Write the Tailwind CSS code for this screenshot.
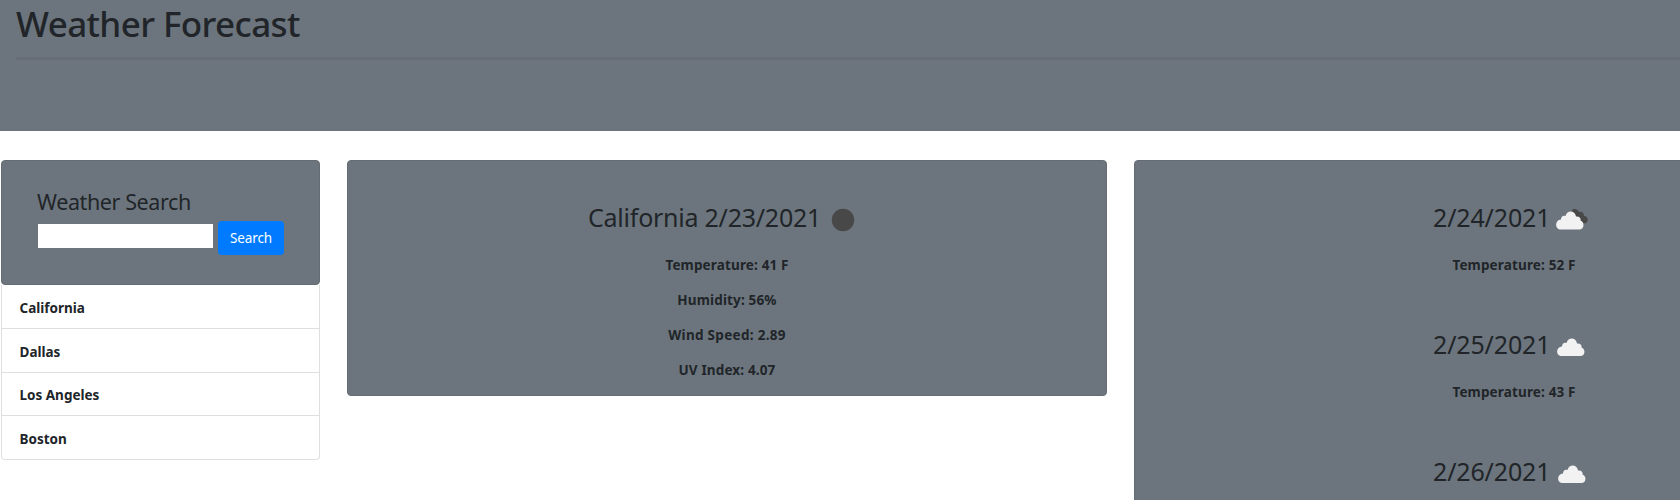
<!DOCTYPE html>
<html lang="en">
<head>
<meta charset="utf-8">
<title>Weather Forecast</title>
<script src="https://cdn.jsdelivr.net/npm/@tailwindcss/browser@4"></script>
</head>
<body class="h-[500px] w-[1680px] overflow-hidden bg-white font-['Noto_Sans',sans-serif] text-[#212529]">
<header class="h-[131px] bg-[#6c757d] pl-4">
  <h1 class="h-[57px] pt-px text-[35px] leading-[45px] font-medium tracking-[-0.6px] whitespace-nowrap">Weather Forecast</h1>
  <hr class="border-t-3 border-[#676e78]">
</header>
<main class="flex h-[369px] items-start overflow-hidden pt-[29px] pl-px">
  <aside class="w-[319px] shrink-0">
    <section class="h-[125px] rounded border border-[#656c74] bg-[#6c757d] pt-[25px] pl-[35px]">
      <h2 class="text-[21.5px] leading-[32px] tracking-[-0.4px] whitespace-nowrap">Weather Search</h2>
      <form class="mt-[3px] flex items-start gap-[5px]">
        <input class="mt-[3px] ml-px h-6 w-[175px] bg-white" aria-label="City">
        <button type="button" class="h-[34px] w-[66px] rounded bg-[#007bff] text-[13.5px] tracking-[-0.1px] text-white">Search</button>
      </form>
    </section>
    <ul class="h-[175px] rounded-b border-x border-b border-[#dfdfdf] text-[13.5px] leading-[43px] font-bold">
      <li class="h-[44px] border-b border-[#dfdfdf] pt-0.5 pl-[17.500px]">California</li>
      <li class="h-[44px] border-b border-[#dfdfdf] pt-0.5 pl-[17.500px]">Dallas</li>
      <li class="h-[43px] border-b border-[#dfdfdf] pt-px pl-[17.500px]">Los Angeles</li>
      <li class="h-[43px] pt-0.5 pl-[17.500px]">Boston</li>
    </ul>
  </aside>
  <section class="ml-[27px] h-[236px] w-[760px] shrink-0 rounded border border-[#656c74] bg-[#6c757d] pt-[37px] text-center">
    <h2 class="flex h-[40px] items-start pl-[240px] text-[25px] leading-[38px] tracking-[-0.24px] whitespace-nowrap"><span class="w-[243px] text-left">California 2/23/2021</span>
      <svg class="mt-[10px] size-6" viewBox="0 0 24 24"><circle cx="12" cy="12" r="11.2" fill="#484848"/></svg></h2>
    <div class="mt-[15px] flex flex-col gap-[10.100px] text-[13.5px] leading-[25px] font-bold tracking-[0.15px]">
      <p>Temperature: 41 F</p>
      <p>Humidity: 56%</p>
      <p class="tracking-[0.3px]">Wind Speed: 2.89</p>
      <p>UV Index: 4.07</p>
    </div>
  </section>
  <section class="ml-[27px] h-[400px] w-[760px] shrink-0 rounded border border-[#656c74] bg-[#6c757d] pt-[37px] text-center">
    <article class="h-[127px]">
      <h2 class="flex h-[40px] items-start pl-[298px] text-[25px] leading-[38px] tracking-[-0.15px] whitespace-nowrap"><span class="w-[122px] text-left">2/24/2021</span>
        <svg class="mt-[11px] h-[22px] w-[34px]" viewBox="0 0 34 22"><path d="M14 6L18 0C20-1 23 1 24 3C27 2 29 4 29 7C32 7 34 10 32 13C31 14.500 29 14.500 28 14L18 12Z" fill="#484848"/><path d="M6 20.500C-.5 20.500-.5 11 6 10.500C6 8 8 6 10.500 7C12 1 20 1 21 7.500C24.500 7 26 9 25.500 11.500C30 13 29 20.500 25 20.500Z" fill="#f2f2f2"/></svg></h2>
      <p class="mt-[15px] text-[13.5px] leading-[25px] font-bold tracking-[0.15px]">Temperature: 52 F</p>
    </article>
    <article class="h-[127px]">
      <h2 class="flex h-[40px] items-start pl-[298px] text-[25px] leading-[38px] tracking-[-0.15px] whitespace-nowrap"><span class="w-[123px] text-left">2/25/2021</span>
        <svg class="mt-[11px] h-[22px] w-[34px]" viewBox="0 0 34 22"><path d="M6 20C-.5 20-.5 11 6 10.500C6 8 8 6 10.500 7C12 1 20 1 21 7.500C24.500 7 26 9 25.500 11.500C30 13 29 20 25 20Z" fill="#f2f2f2"/></svg></h2>
      <p class="mt-[15px] text-[13.5px] leading-[25px] font-bold tracking-[0.15px]">Temperature: 43 F</p>
    </article>
    <article class="h-[127px]">
      <h2 class="flex h-[40px] items-start pl-[298px] text-[25px] leading-[38px] tracking-[-0.15px] whitespace-nowrap"><span class="w-[124px] text-left">2/26/2021</span>
        <svg class="mt-[11px] h-[22px] w-[34px]" viewBox="0 0 34 22"><path d="M6 20C-.5 20-.5 11 6 10.500C6 8 8 6 10.500 7C12 1 20 1 21 7.500C24.500 7 26 9 25.500 11.500C30 13 29 20 25 20Z" fill="#f2f2f2"/></svg></h2>
    </article>
  </section>
</main>
</body>
</html>
